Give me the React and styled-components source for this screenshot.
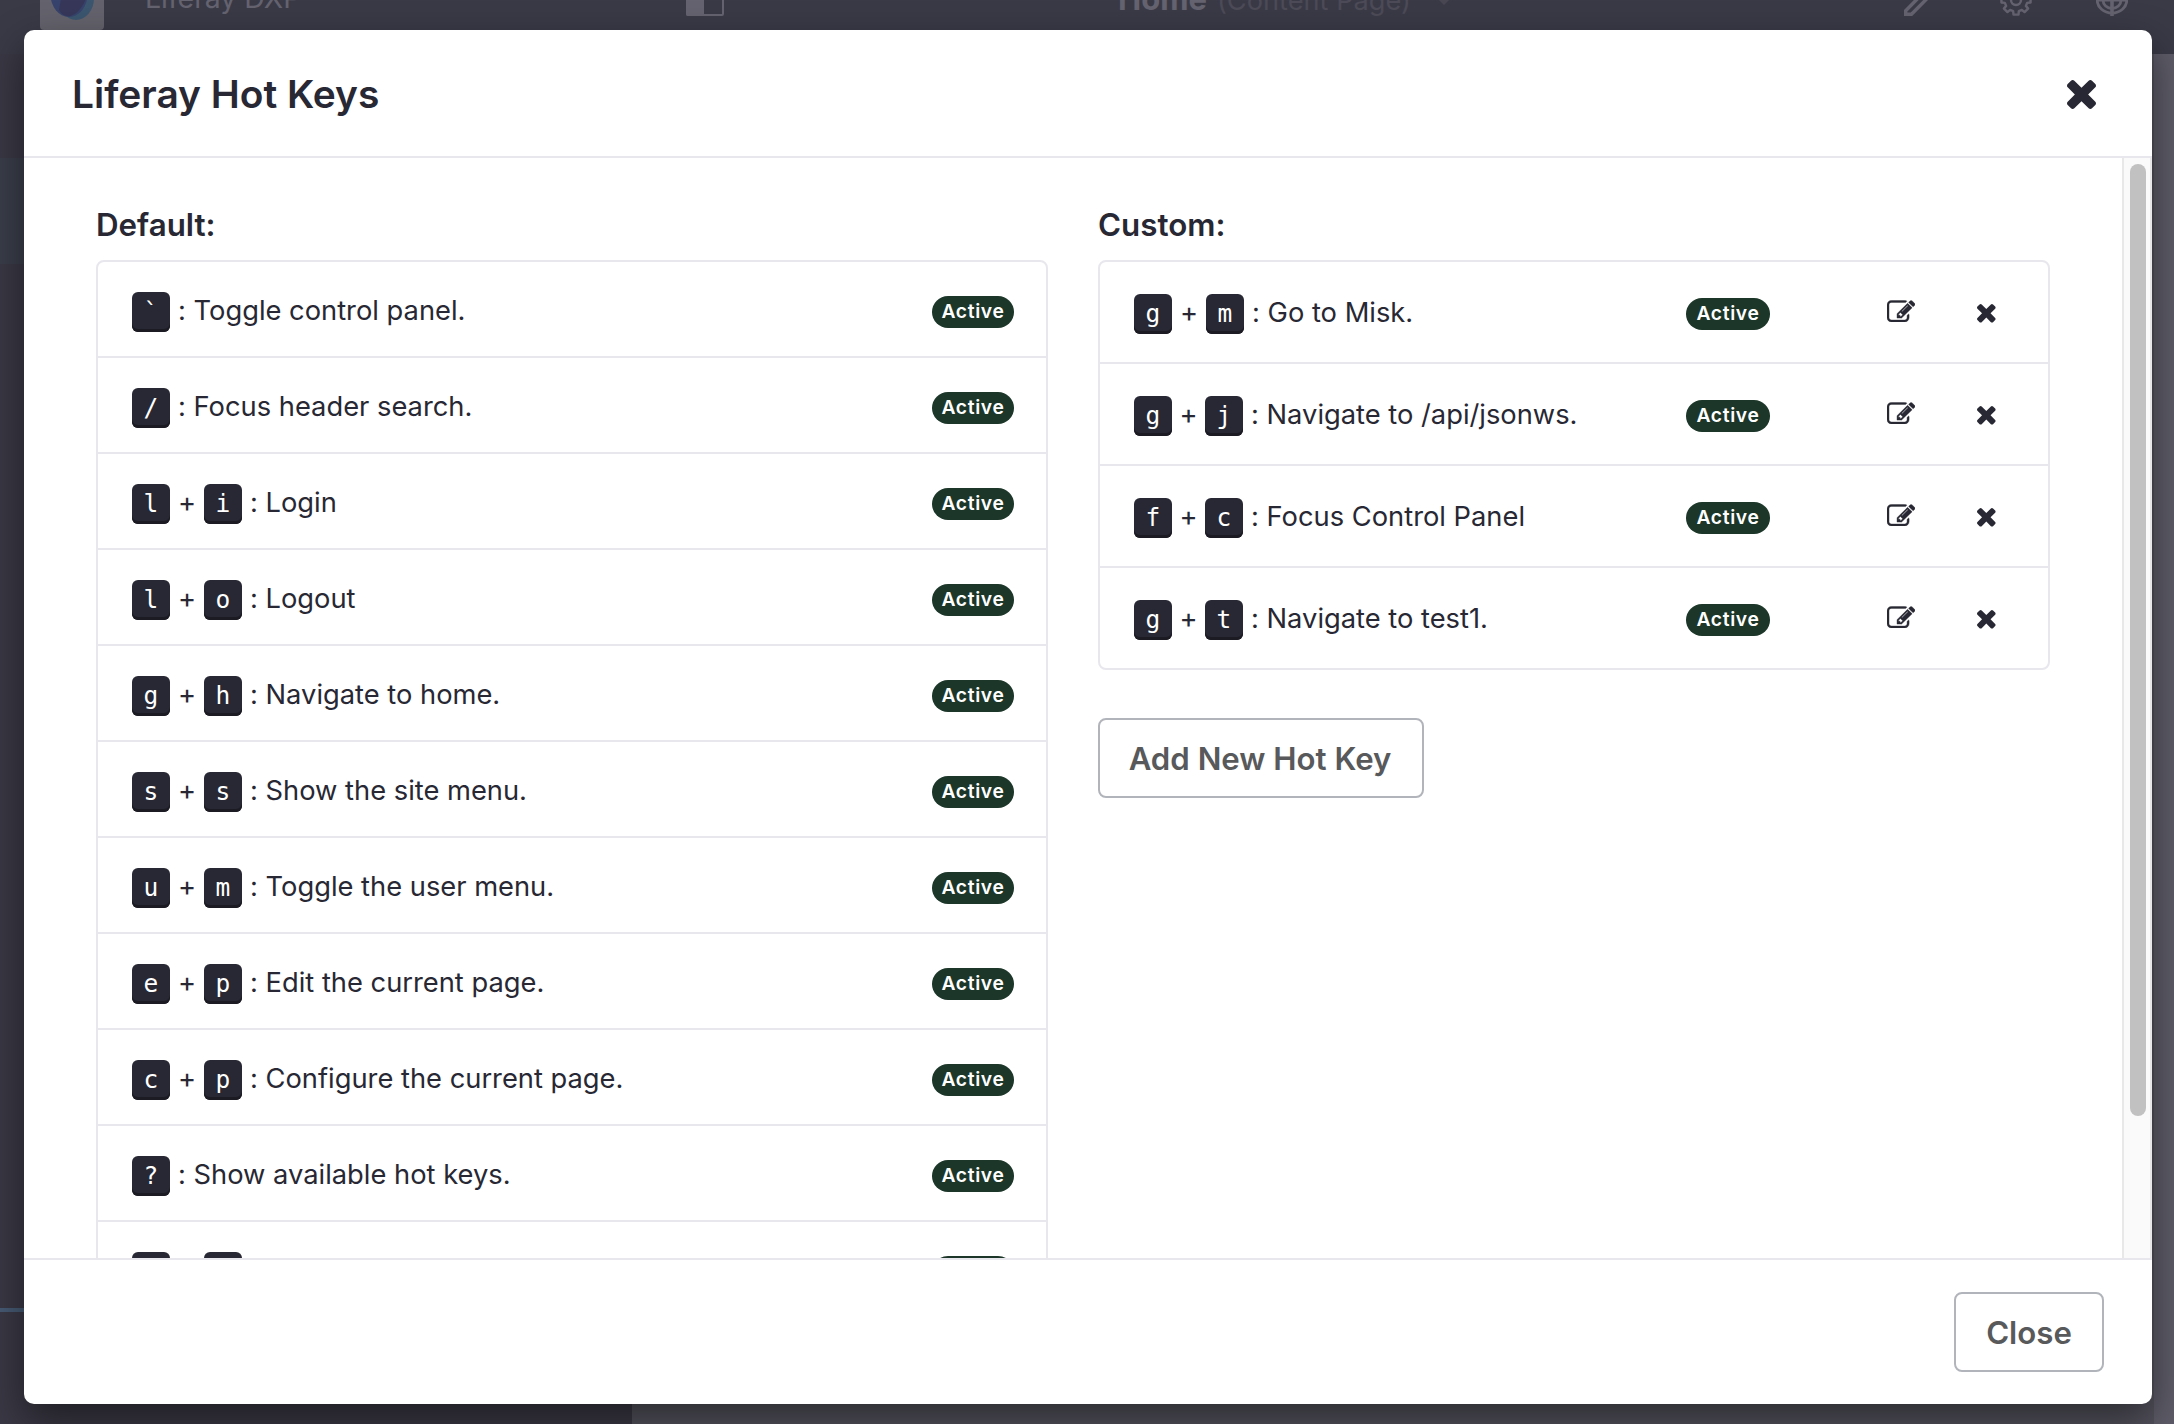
import React, { Fragment } from "react";
import styled, { createGlobalStyle, css } from "styled-components";

const GlobalStyle = createGlobalStyle`
  *, *::before, *::after { box-sizing: border-box; }
  body {
    margin: 0;
    overflow: hidden;
    color: #272833;
    font-family: Inter, "Liberation Sans", sans-serif;
    font-feature-settings: "calt" 0;
  }
`;

const Screen = styled.div`
  position: relative;
  display: flex;
  flex-direction: column;
  width: 2174px;
  height: 1424px;
  overflow: hidden;
  background: #5d5c68;
`;

/* ---------- page behind the dialog ---------- */

const TopBar = styled.header`
  display: grid;
  grid-template-columns: 105px 541px 432px 782px 100px 96px 1fr;
  align-items: start;
  flex: none;
  height: 54px;
  padding-left: 40px;
  overflow: hidden;
  background: #3a3a47;
  color: #65636f;
`;

const Logo = styled.div`
  width: 64px;
  height: 64px;
  margin-top: -34px;
  border-radius: 4px;
  overflow: hidden;
  background: #64626c;

  svg { display: block; }
`;

const SiteName = styled.div`
  margin-top: -22px;
  font-size: 28.4px;
  line-height: 40px;
  white-space: nowrap;
`;

const PageName = styled.div`
  display: flex;
  align-items: baseline;
  margin-top: -21px;
  font-size: 31px;
  font-weight: 700;
  line-height: 40px;
  white-space: nowrap;
`;

const PageKind = styled.span`
  margin-left: 10px;
  color: #4c4b57;
  font-size: 27.2px;
  font-weight: 400;
`;

const Caret = styled.span`
  align-self: flex-start;
  margin: 18px 0 0 25px;
  border: 8px solid transparent;
  border-bottom: 0;
  border-top-color: #484752;
`;

const BarIcon = styled.svg`
  display: block;
  margin-top: -16px;
  margin-left: ${(p) => p.$shift || 0}px;
  fill: none;
  stroke: currentColor;
  stroke-width: 2.4;
`;

const Backdrop = styled.div`
  display: grid;
  grid-template-columns: 632px 1522px 1fr;
  flex: 1;
`;

const Sidebar = styled.div`
  display: grid;
  grid-template-rows: 104px 106px 1044px 4px 1fr;
`;

const SidebarBand = styled.div`
  background: ${(p) => p.$tone};
`;

const PageArea = styled.div`
  background: #53525d;
`;

/* ---------- dialog ---------- */

const Dialog = styled.section`
  position: absolute;
  top: 30px;
  left: 24px;
  display: flex;
  flex-direction: column;
  width: 2128px;
  height: 1374px;
  border-radius: 10px;
  background: #fff;
  box-shadow: 0 16px 40px rgba(0, 0, 0, 0.48);
`;

const DialogHeader = styled.div`
  display: flex;
  align-items: center;
  justify-content: space-between;
  flex: none;
  height: 128px;
  padding: 2px 56px 0 48px;
  border-bottom: 2px solid #e7e7ed;
`;

const Title = styled.h1`
  margin: 0;
  font-size: 38.9px;
  font-weight: 620;
  line-height: 48px;
`;

const IconButton = styled.button`
  display: block;
  padding: 0;
  border: 0;
  background: none;
  color: #272833;
  line-height: 0;

  svg { display: block; fill: currentColor; }
`;

const DialogBody = styled.div`
  display: flex;
  flex: 1;
  min-height: 0;
  overflow: hidden;
`;

const Columns = styled.div`
  display: grid;
  grid-template-columns: 952px 952px;
  column-gap: 50px;
  align-items: start;
  flex: 1;
  padding: 47px 0 0 72px;
`;

const SectionTitle = styled.h2`
  margin: 0 0 15px;
  font-size: 31.3px;
  font-weight: 570;
  line-height: 40px;
`;

const List = styled.ul`
  margin: 0;
  padding: 0;
  list-style: none;
  border: 2px solid #e7e7ed;
  border-radius: 8px;
`;

const Row = styled.li`
  display: grid;
  align-items: start;
  box-sizing: content-box;

  &:not(:first-child) { border-top: 2px solid #e7e7ed; }

  ${(p) =>
    p.$editable
      ? css`
          grid-template-columns: 1fr 201px 90px 19px;
          height: 68px;
          padding: 32px 52px 0 34px;
        `
      : css`
          grid-template-columns: 1fr auto;
          height: 64px;
          padding: 30px 32px 0 34px;
        `}
`;

const Shortcut = styled.div`
  display: flex;
  align-items: flex-start;
`;

const Key = styled.kbd`
  width: 38px;
  height: 40px;
  border-radius: 6px;
  background: #272833;
  box-shadow: inset 0 -3px 0 #1c1b24;
  color: #fff;
  font-family: "DejaVu Sans Mono", monospace;
  font-size: 24.5px;
  line-height: 39px;
  text-align: center;
`;

const Plus = styled.span`
  width: ${(p) => p.$width}px;
  margin-top: -1px;
  font-size: 27.3px;
  line-height: 40px;
  text-align: center;
`;

const Label = styled.span`
  margin: -1px 0 0 8px;
  font-size: 27.3px;
  line-height: 40px;
  white-space: nowrap;
`;

const Badge = styled.span`
  width: ${(p) => p.$width}px;
  height: 32px;
  margin-top: 4px;
  border-radius: 16px;
  background: #1c3629;
  color: #fff;
  font-size: 19.3px;
  font-weight: 560;
  letter-spacing: 0.65px;
  line-height: 30px;
  text-align: center;
`;

const EditButton = styled(IconButton)`
  margin-top: 6px;
`;

const RemoveButton = styled(IconButton)`
  margin-top: 10px;
`;

const Button = styled.button`
  height: 80px;
  padding: 2px 0 0;
  border: 2px solid #b1b4bb;
  border-radius: 8px;
  background: #fff;
  color: #58595b;
  font: 580 31.2px/74px Inter, "Liberation Sans", sans-serif;
  text-align: center;
  white-space: nowrap;
`;

const AddButton = styled(Button)`
  width: 326px;
  margin-top: 48px;
  padding-right: 2px;
`;

const CloseButton = styled(Button)`
  width: 150px;
`;

const ScrollTrack = styled.div`
  flex: none;
  width: 30px;
  padding: 6px 4px 0 6px;
  border: solid #e8e8e8;
  border-width: 0 2px;
  background: #fafafa;
`;

const ScrollThumb = styled.div`
  width: 16px;
  height: 952px;
  border-radius: 8px;
  background: #c1c1c1;
`;

const DialogFooter = styled.div`
  display: flex;
  align-items: flex-start;
  justify-content: flex-end;
  flex: none;
  height: 146px;
  padding: 32px 48px 0;
  border-top: 2px solid #e7e7ed;
`;

/* ---------- icons ---------- */

const TimesIcon = ({ size }) => (
  <svg width={size} height={size} viewBox="302 366 1188 1188">
    <path d="M1490 1322q0 40-28 68l-136 136q-28 28-68 28t-68-28l-294-294-294 294q-28 28-68 28t-68-28l-136-136q-28-28-28-68t28-68l294-294-294-294q-28-28-28-68t28-68l136-136q28-28 68-28t68 28l294 294 294-294q28-28 68-28t68 28l136 136q28 28 28 68t-28 68l-294 294 294 294q28 28 28 68z" />
  </svg>
);

const EditIcon = () => (
  <svg width="28" height="22" viewBox="0 100 1784 1436" preserveAspectRatio="none">
    <path
      stroke="currentColor"
      strokeWidth="26"
      d="M888 1184l116-116-152-152-116 116v56h96v96h56zm440-720q-16-16-33 1l-350 350q-17 17-1 33t33-1l350-350q17-17 1-33zm80 594v190q0 119-84.500 203.500t-203.500 84.500h-832q-119 0-203.500-84.500t-84.500-203.500v-832q0-119 84.500-203.500t203.500-84.500h832q63 0 117 25 15 7 18 23 3 17-9 29l-49 49q-14 14-32 8-23-6-45-6h-832q-66 0-113 47t-47 113v832q0 66 47 113t113 47h832q66 0 113-47t47-113v-126q0-13 9-22l64-64q15-15 35-7t20 29zm-96-738l288 288-672 672h-288v-288zm444 132l-92 92-288-288 92-92q28-28 68-28t68 28l152 152q28 28 28 68t-28 68z"
    />
  </svg>
);

const gearPath = (() => {
  const points = [];
  for (let i = 0; i < 8; i += 1) {
    const mid = (i * Math.PI) / 4;
    [[-0.25, 11.5], [-0.17, 14.8], [0.17, 14.8], [0.25, 11.5]].forEach(([a, r]) => {
      points.push(`${(16 + r * Math.cos(mid + a)).toFixed(2)} ${(16 + r * Math.sin(mid + a)).toFixed(2)}`);
    });
  }
  return `M${points.join("L")}Z`;
})();

const PanelIcon = () => (
  <BarIcon width="38" height="32" viewBox="0 0 38 32">
    <rect x="1" y="1" width="36" height="30" rx="1" strokeWidth="2" />
    <path d="M0 0h18v32h-16q-2 0-2-2z" fill="currentColor" stroke="none" />
  </BarIcon>
);

const PencilIcon = () => (
  <BarIcon $shift={4} width="32" height="32" viewBox="0 0 32 32">
    <path d="M1.700 30.300v-3.500L25 3l5 4.500L7.500 30.300z" strokeWidth="3.400" />
  </BarIcon>
);

const GearIcon = () => (
  <BarIcon width="32" height="32" viewBox="0 0 32 32">
    <path d={gearPath} strokeLinejoin="round" />
    <circle cx="16" cy="16" r="5" />
  </BarIcon>
);

const TargetIcon = () => (
  <BarIcon width="32" height="32" viewBox="0 0 32 32">
    <path d="M1.200 16a14.800 13 0 0 0 29.600 0M7 16a9 8.500 0 0 0 18 0M0 16h32" strokeWidth="2.800" />
    <path d="M16 0v32" strokeWidth="3.600" />
  </BarIcon>
);

const LogoMark = () => (
  <svg width="64" height="64" viewBox="0 0 64 64">
    <ellipse cx="36" cy="32" rx="18" ry="22" fill="#3c5670" />
    <ellipse cx="29" cy="28" rx="18.500" ry="23" fill="#37436c" />
    <path d="M19 44C26 56 40 50 47 30L46 10L24 16Z" fill="#37375a" />
  </svg>
);

/* ---------- data ---------- */

const defaultKeys = [
  { keys: ["`"], label: "Toggle control panel." },
  { keys: ["/"], label: "Focus header search." },
  { keys: ["l", "i"], label: "Login" },
  { keys: ["l", "o"], label: "Logout" },
  { keys: ["g", "h"], label: "Navigate to home." },
  { keys: ["s", "s"], label: "Show the site menu." },
  { keys: ["u", "m"], label: "Toggle the user menu." },
  { keys: ["e", "p"], label: "Edit the current page." },
  { keys: ["c", "p"], label: "Configure the current page." },
  { keys: ["?"], label: "Show available hot keys." },
  { keys: ["", ""] },
];

const customKeys = [
  { keys: ["g", "m"], label: "Go to Misk.", gap: 34 },
  { keys: ["g", "j"], label: "Navigate to /api/jsonws.", gap: 33 },
  { keys: ["f", "c"], label: "Focus Control Panel", gap: 33 },
  { keys: ["g", "t"], label: "Navigate to test1.", gap: 33 },
];

const HotKey = ({ keys, label, gap = 34 }) => (
  <Shortcut>
    {keys.map((k, i) => (
      <Fragment key={i}>
        {i > 0 && <Plus $width={gap}>+</Plus>}
        <Key>{k}</Key>
      </Fragment>
    ))}
    {label && <Label>: {label}</Label>}
  </Shortcut>
);

export default function App() {
  return (
    <Screen>
      <GlobalStyle />
      <TopBar>
        <Logo><LogoMark /></Logo>
        <SiteName>Liferay DXP</SiteName>
        <PanelIcon />
        <PageName>
          Home <PageKind>(Content Page)</PageKind>
          <Caret />
        </PageName>
        <PencilIcon />
        <GearIcon />
        <TargetIcon />
      </TopBar>
      <Backdrop>
        <Sidebar>
          <SidebarBand $tone="#3a3844" />
          <SidebarBand $tone="#3a3e4a" />
          <SidebarBand $tone="#3a3844" />
          <SidebarBand $tone="#465a73" />
          <SidebarBand $tone="#3a3844" />
        </Sidebar>
        <PageArea />
      </Backdrop>

      <Dialog>
        <DialogHeader>
          <Title>Liferay Hot Keys</Title>
          <IconButton aria-label="Close dialog"><TimesIcon size={29} /></IconButton>
        </DialogHeader>
        <DialogBody>
          <Columns>
            <div>
              <SectionTitle>Default:</SectionTitle>
              <List>
                {defaultKeys.map((item, i) => (
                  <Row key={i}>
                    <HotKey {...item} />
                    <Badge $width={82}>Active</Badge>
                  </Row>
                ))}
              </List>
            </div>
            <div>
              <SectionTitle>Custom:</SectionTitle>
              <List>
                {customKeys.map((item) => (
                  <Row key={item.label} $editable>
                    <HotKey {...item} />
                    <Badge $width={84}>Active</Badge>
                    <EditButton aria-label="Edit"><EditIcon /></EditButton>
                    <RemoveButton aria-label="Remove"><TimesIcon size={18.6} /></RemoveButton>
                  </Row>
                ))}
              </List>
              <AddButton>Add New Hot Key</AddButton>
            </div>
          </Columns>
          <ScrollTrack><ScrollThumb /></ScrollTrack>
        </DialogBody>
        <DialogFooter>
          <CloseButton>Close</CloseButton>
        </DialogFooter>
      </Dialog>
    </Screen>
  );
}
